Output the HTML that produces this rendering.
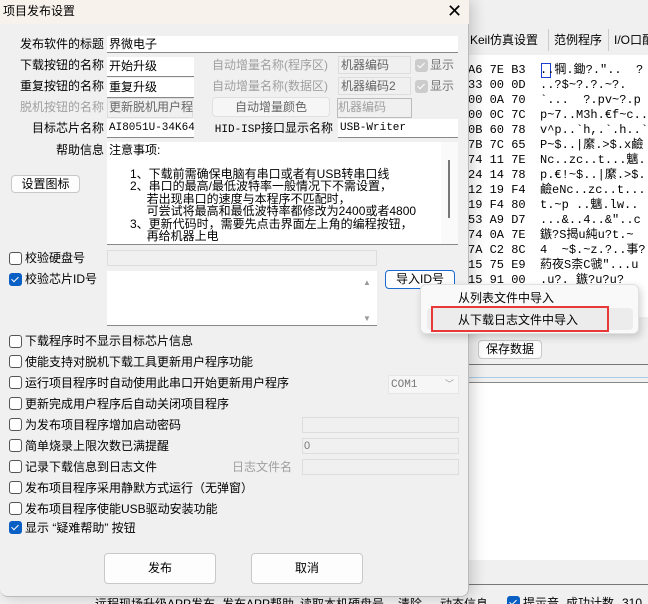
<!DOCTYPE html>
<html><head><meta charset="utf-8"><style>
*{margin:0;padding:0;box-sizing:border-box}
html,body{width:648px;height:604px;overflow:hidden}
body{background:#f0f0f0;position:relative;font-family:"Liberation Sans","Noto Sans CJK SC","WenQuanYi Zen Hei",sans-serif;font-size:12px;color:#000}
.a{position:absolute;white-space:nowrap;line-height:16px}
.r{position:absolute;white-space:nowrap;line-height:16px;text-align:right}
.g{color:#a0a0a0}
.in{position:absolute;background:#fff;border-bottom:1px solid #888;line-height:18px;padding-left:2px;white-space:nowrap;overflow:hidden}
.dis{position:absolute;background:#f0f0f0;border:1px solid #ddd}
.cb{position:absolute;width:13px;height:13px;border:1px solid #555;border-radius:3px;background:#fff}
.ck{position:absolute;width:13px;height:13px;border-radius:3px;background:#0a5fc4}
.ck:after{content:"";position:absolute;left:4px;top:2px;width:3px;height:6px;border:solid #fff;border-width:0 1.5px 1.5px 0;transform:rotate(45deg)}
.btn{position:absolute;background:#fdfdfd;border:1px solid #c8c8c8;border-radius:4px;text-align:center}
.mono{font-family:"Liberation Mono",monospace}
.hex{position:absolute;left:468px;font-family:"Liberation Mono","Noto Sans CJK SC",monospace;font-size:12px;line-height:15px;white-space:pre}
</style></head><body>
<div style="position:absolute;left:468px;top:0;width:180px;height:604px;background:#f0f0f0"></div>
<div class="a" style="left:470px;top:32px;">Keil仿真设置</div>
<div class="a" style="left:554px;top:32px;">范例程序</div>
<div class="a" style="left:614px;top:32px;">I/O口配</div>
<div style="position:absolute;left:548px;top:29px;width:1px;height:22px;background:#ccc"></div>
<div style="position:absolute;left:608px;top:29px;width:1px;height:22px;background:#ccc"></div>
<div style="position:absolute;left:468px;top:55px;width:180px;height:262px;background:#fff"></div>
<div style="position:absolute;left:541px;top:63px;width:10px;height:15px;border:1px solid #1a3fd0"></div>
<div class="hex" style="top:63px">A6 7E B3  ..犅.鋤?."..  ?
33 00 0D  ..?$~?.?.~?.
00 0A 70  `...  ?.pv~?.p
00 0C 7C  p~7..M3h.€f~c..
0B 60 78  v^p..`h,.`.h..`
7B 7C 65  P~$..|縻.>$.x鹼
74 11 7E  Nc..zc..t...魑.
24 14 78  p.€!~$..|縻.>$.
12 19 F4  鹼eNc..zc..t...
19 F4 80  t.~p ..魑.lw..
53 A9 D7  ...&..4..&"..c
74 0A 7E  鏃?S揭u純u?t.~
7A C2 8C  4  ~$.~z.?..事?
15 75 E9  葯夜S柰C虢"...u
15 91 00  .u?. 鏃?u?u?</div>
<div class="btn" style="left:478px;top:340px;width:64px;height:19px;line-height:17px">保存数据</div>
<div style="position:absolute;left:468px;top:364px;width:180px;height:1px;background:#777"></div>
<div style="position:absolute;left:468px;top:377px;width:180px;height:1px;background:#a9cbe8"></div>
<div style="position:absolute;left:468px;top:382px;width:180px;height:178px;background:#fff;border-top:1px solid #888"></div>
<div style="position:absolute;left:468px;top:584px;width:180px;height:1px;background:#777"></div>
<div class="a" style="left:95px;top:596px;">远程现场升级APP发布</div>
<div class="a" style="left:222px;top:596px;">发布APP帮助</div>
<div class="a" style="left:300px;top:596px;">读取本机硬盘号</div>
<div class="a" style="left:398px;top:596px;">清除</div>
<div class="a" style="left:440px;top:596px;">动态信息</div>
<div class="ck" style="left:507px;top:596px"></div>
<div class="a" style="left:523px;top:595px;">提示音</div>
<div class="a" style="left:566px;top:595px;">成功计数</div>
<div class="a" style="left:622px;top:595px;">310</div>

<div style="position:absolute;left:0;top:0;width:469px;height:597px;background:#f0f0f0;border-right:1px solid #bbb;border-bottom:1px solid #bbb;border-radius:0 0 8px 8px;box-shadow:4px 0 14px rgba(0,0,0,.18)"></div>
<div style="position:absolute;left:0;top:0;width:469px;height:24px;background:#f8f2ec"></div>
<div class="a" style="left:3px;top:3px;">项目发布设置</div>
<div class="a" style="left:447px;top:1px;font-size:18px;line-height:20px">✕</div>

<div class="r" style="left:0;width:104px;top:36px;">发布软件的标题</div>
<div class="in" style="left:107px;top:36px;width:351px;height:17px;line-height:17px">界微电子</div>
<div class="r" style="left:0;width:104px;top:57px;">下载按钮的名称</div>
<div class="in" style="left:107px;top:57px;width:87px;height:20px">开始升级</div>
<div class="a g" style="left:212px;top:57px;">自动增量名称(程序区)</div>
<div class="dis" style="left:338px;top:56px;width:73px;height:18px;"></div><div class="a" style="left:341px;top:57px;color:#666">机器编码</div>
<div class="ck" style="left:415px;top:59px;background:#ccc"></div><div class="a" style="left:430px;top:57px;color:#777">显示</div>
<div class="r" style="left:0;width:104px;top:78px;">重复按钮的名称</div>
<div class="in" style="left:107px;top:78px;width:87px;height:20px">重复升级</div>
<div class="a g" style="left:212px;top:78px;">自动增量名称(数据区)</div>
<div class="dis" style="left:338px;top:77px;width:73px;height:18px;"></div><div class="a" style="left:341px;top:78px;color:#666">机器编码2</div>
<div class="ck" style="left:415px;top:80px;background:#ccc"></div><div class="a" style="left:430px;top:78px;color:#777">显示</div>
<div class="r g" style="left:0;width:104px;top:99px;">脱机按钮的名称</div>
<div class="dis" style="left:107px;top:98px;width:86px;height:20px"></div><div class="a" style="left:109px;top:99px;color:#666">更新脱机用户程</div>
<div class="btn" style="left:212px;top:97px;width:118px;height:20px;line-height:18px;color:#666;background:#f6f6f6;border-color:#e0e0e0">自动增量颜色</div>
<div class="dis" style="left:337px;top:98px;width:75px;height:20px;border-color:#bbb"></div><div class="a g" style="left:338px;top:99px;">机器编码</div>
<div class="r" style="left:0;width:104px;top:120px;">目标芯片名称</div>
<div class="in mono" style="left:107px;top:119px;width:87px;height:19px;font-size:11px">AI8051U-34K64</div>
<div class="r" style="left:0;width:333px;top:120px;"><span class="mono" style="font-size:11px">HID-ISP</span>接口显示名称</div>
<div class="in mono" style="left:338px;top:119px;width:120px;height:19px;font-size:11px">USB-Writer</div>
<div class="r" style="left:0;width:104px;top:142px;">帮助信息</div>
<div style="position:absolute;left:107px;top:142px;width:351px;height:103px;background:#fff;border-bottom:1px solid #888"></div>
<div style="position:absolute;left:441px;top:142px;width:17px;height:102px;background:#fafafa"></div>
<div style="position:absolute;left:448px;top:160px;width:2px;height:58px;background:#777"></div>
<div class="a" style="left:109px;top:143px;line-height:14px">注意事项:</div>
<div class="a" style="left:130px;top:168px;line-height:12.4px;font-size:12px">1、下载前需确保电脑有串口或者有USB转串口线<br>2、串口的最高/最低波特率一般情况下不需设置，<br>&nbsp;&nbsp;&nbsp;&nbsp;&nbsp;若出现串口的速度与本程序不匹配时，<br>&nbsp;&nbsp;&nbsp;&nbsp;&nbsp;可尝试将最高和最低波特率都修改为2400或者4800<br>3、更新代码时，需要先点击界面左上角的编程按钮，<br>&nbsp;&nbsp;&nbsp;&nbsp;&nbsp;再给机器上电</div>
<div class="btn" style="left:11px;top:175px;width:69px;height:18px;line-height:16px">设置图标</div>

<div class="cb" style="left:9px;top:252px"></div><div class="a" style="left:25px;top:250px;">校验硬盘号</div>
<div class="dis" style="left:107px;top:250px;width:270px;height:16px;border-color:#ddd"></div>
<div class="ck" style="left:9px;top:273px"></div><div class="a" style="left:25px;top:271px;">校验芯片ID号</div>
<div style="position:absolute;left:107px;top:271px;width:270px;height:55px;background:#fff;border-bottom:1px solid #888"></div>
<div class="a" style="left:363px;top:275px;font-size:8px;color:#999">▲</div>
<div class="a" style="left:363px;top:311px;font-size:8px;color:#999">▼</div>
<div class="btn" style="left:385px;top:270px;width:70px;height:19px;line-height:17px;border:1px solid #1a6ad0">导入ID号</div>

<div class="cb" style="left:9px;top:335px"></div><div class="a" style="left:25px;top:333px;">下载程序时不显示目标芯片信息</div>
<div class="cb" style="left:9px;top:355px"></div><div class="a" style="left:25px;top:354px;">使能支持对脱机下载工具更新用户程序功能</div>
<div class="cb" style="left:9px;top:376px"></div><div class="a" style="left:25px;top:375px;">运行项目程序时自动使用此串口开始更新用户程序</div>
<div style="position:absolute;left:388px;top:375px;width:71px;height:19px;background:#f6f6f6;border:1px solid #e6e6e6"></div><div class="a mono" style="left:391px;top:377px;font-size:11px;color:#777">COM1</div><div class="a" style="left:445px;top:376px;font-size:9px;color:#999">﹀</div>
<div class="cb" style="left:9px;top:397px"></div><div class="a" style="left:25px;top:396px;">更新完成用户程序后自动关闭项目程序</div>
<div class="cb" style="left:9px;top:418px"></div><div class="a" style="left:25px;top:417px;">为发布项目程序增加启动密码</div>
<div class="dis" style="left:302px;top:417px;width:157px;height:16px"></div>
<div class="cb" style="left:9px;top:439px"></div><div class="a" style="left:25px;top:438px;">简单烧录上限次数已满提醒</div>
<div class="dis" style="left:302px;top:438px;width:157px;height:16px"></div><div class="a" style="left:304px;top:438px;color:#777;font-size:11px">0</div>
<div class="cb" style="left:9px;top:460px"></div><div class="a" style="left:25px;top:459px;">记录下载信息到日志文件</div>
<div class="a g" style="left:232px;top:459px;">日志文件名</div>
<div class="dis" style="left:302px;top:459px;width:157px;height:16px"></div>
<div class="cb" style="left:9px;top:481px"></div><div class="a" style="left:25px;top:480px;">发布项目程序采用静默方式运行（无弹窗）</div>
<div class="cb" style="left:9px;top:502px"></div><div class="a" style="left:25px;top:501px;">发布项目程序使能USB驱动安装功能</div>
<div class="ck" style="left:9px;top:521px"></div><div class="a" style="left:25px;top:520px;">显示 “疑难帮助” 按钮</div>

<div class="btn" style="left:104px;top:553px;width:112px;height:31px;line-height:29px">发布</div>
<div class="btn" style="left:251px;top:553px;width:112px;height:31px;line-height:29px">取消</div>

<div style="position:absolute;left:420px;top:284px;width:219px;height:50px;background:#f9f9f9;border:1px solid #e0e0e0;border-radius:6px;box-shadow:2px 3px 8px rgba(0,0,0,.18)"></div>
<div style="position:absolute;left:427px;top:308px;width:206px;height:22px;background:#ececec;border-radius:4px"></div>
<div class="a" style="left:458px;top:290px;">从列表文件中导入</div>
<div class="a" style="left:458px;top:312px;">从下载日志文件中导入</div>
<div style="position:absolute;left:431px;top:306px;width:178px;height:26px;border:2px solid #e8383a"></div>
</body></html>
